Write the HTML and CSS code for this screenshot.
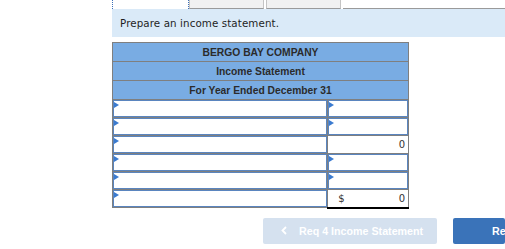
FILE: index.html
```html
<!DOCTYPE html>
<html lang="en">

<head>
    <meta charset="UTF-8">
    <meta name="viewport" content="width=device-width, initial-scale=1.0">
    <link rel="stylesheet" href="styles.css">
    <title>Income Statement</title>
</head>

<body>
    <div class="page">
        <div class="tabs">
            <div class="tab active"></div>
            <div class="tab"></div>
            <div class="tab"></div>
            <div class="tabfill"></div>
        </div>
        <div class="prompt">Prepare an income statement.</div>

        <table class="stmt">
            <tr class="head"><td colspan="2">BERGO BAY COMPANY</td></tr>
            <tr class="head"><td colspan="2">Income Statement</td></tr>
            <tr class="head"><td colspan="2">For Year Ended December 31</td></tr>
            <tr>
                <td class="lbl"><div class="sel"><input type="text"></div></td>
                <td class="amt"><div class="sel"><input type="text"></div></td>
            </tr>
            <tr>
                <td class="lbl"><div class="sel"><input type="text"></div></td>
                <td class="amt"><div class="sel"><input type="text"></div></td>
            </tr>
            <tr>
                <td class="lbl"><div class="sel"><input type="text"></div></td>
                <td class="amt total"><span></span><span>0</span></td>
            </tr>
            <tr>
                <td class="lbl"><div class="sel"><input type="text"></div></td>
                <td class="amt"><div class="sel"><input type="text"></div></td>
            </tr>
            <tr>
                <td class="lbl"><div class="sel"><input type="text"></div></td>
                <td class="amt"><div class="sel"><input type="text"></div></td>
            </tr>
            <tr>
                <td class="lbl"><div class="sel"><input type="text"></div></td>
                <td class="amt total net"><span>$</span><span>0</span></td>
            </tr>
        </table>

        <div class="nav">
            <div class="btn prev">
                <svg width="6" height="9" viewBox="0 0 6 9"><path d="M5 1 L1.5 4.5 L5 8" fill="none" stroke="white" stroke-width="1.8"/></svg>
                <span>Req 4 Income Statement</span>
            </div>
            <div class="btn next">
                <span>Re</span>
            </div>
        </div>
    </div>
</body>

</html>
```

FILE: styles.css
```css
* {
    padding: 0;
    margin: 0;
    box-sizing: border-box;
}

body {
    background: white;
    overflow: hidden;
    width: 505px;
    height: 249px;
}

.page {
    padding-left: 112px;
    width: 505px;
}

.tabs {
    display: flex;
    height: 9px;
}

.tab {
    width: 75px;
    height: 9px;
    margin-right: 2px;
    background-color: #f1f1f1;
    border: 1px solid #c4c4c4;
    border-top: none;
    border-bottom: 1px solid #9a9a9a;
}

.tab.active {
    width: 77px;
    margin-right: 0;
    background-color: white;
    border: none;
    border-left: 1px dotted #3d6fb8;
    border-right: 1px dotted #3d6fb8;
}

.tabfill {
    flex: 1;
    border-bottom: 1px solid #9a9a9a;
}

.prompt {
    height: 28px;
    line-height: 28px;
    padding-left: 8px;
    background-color: #daeaf8;
    font-family: "DejaVu Sans", Verdana, sans-serif;
    font-size: 10.3px;
    letter-spacing: 0.1px;
    color: #1e1e1e;
}

.stmt {
    margin-top: 5px;
    width: 297px;
    border-collapse: collapse;
    font-family: "Liberation Sans", Arial, sans-serif;
}

.stmt td {
    border: 1px solid #7f7f7f;
    padding: 0;
}

.head td {
    height: 19px;
    background-color: #79ace3;
    text-align: center;
    font-size: 10.3px;
    font-weight: bold;
    color: #2b2b2b;
}

.lbl {
    width: 216px;
}

.amt {
    width: 81px;
}

.sel {
    position: relative;
    height: 17px;
}

.sel input {
    display: block;
    width: 100%;
    height: 17px;
    border: 1px solid #5a85bf;
    background: white;
    outline: none;
}

.sel::before {
    content: "";
    position: absolute;
    top: 2px;
    left: 1px;
    border-left: 5px solid #3b7bd0;
    border-top: 3px solid transparent;
    border-bottom: 3px solid transparent;
}

.total {
    height: 18px;
    border-top: 1px solid black !important;
    font-family: "DejaVu Sans", Verdana, sans-serif;
    font-size: 10px;
    color: #333;
}

.total span:first-child {
    float: left;
    padding-left: 10px;
}

.total span:last-child {
    float: right;
    padding-right: 3px;
}

.net {
    border-bottom: 2px solid black !important;
}

.nav {
    display: flex;
    gap: 16px;
    margin-top: 9px;
    padding-left: 151px;
}

.btn {
    flex: none;
    display: flex;
    align-items: center;
    height: 26px;
    width: 174px;
    border-radius: 2px;
    font-family: "Liberation Sans", Arial, sans-serif;
    font-size: 10.7px;
    font-weight: bold;
    color: white;
}

.prev {
    background-color: #d5e1ef;
    padding-left: 18px;
    gap: 12px;
}

.next {
    width: 52px;
    background-color: #3a73b9;
    padding-left: 39px;
    white-space: nowrap;
}
```
